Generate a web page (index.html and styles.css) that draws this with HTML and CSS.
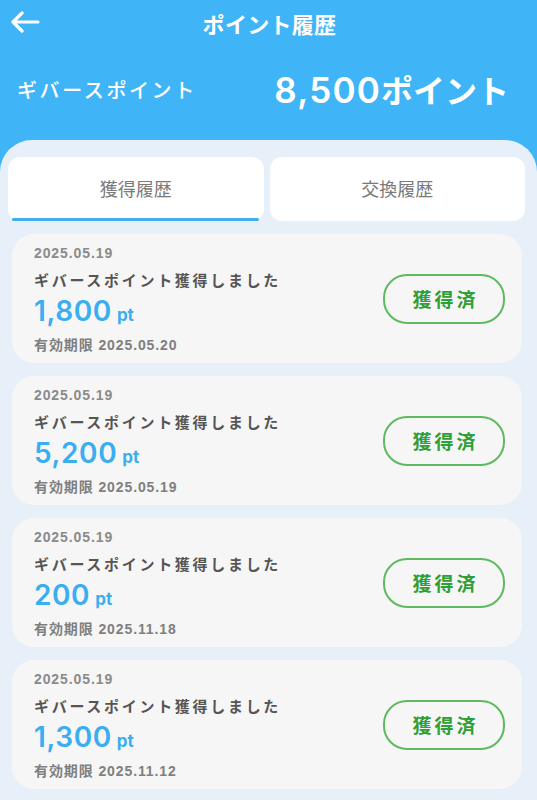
FILE: index.html
```html
<!DOCTYPE html>
<html lang="ja">
<head>
<meta charset="utf-8">
<title>ポイント履歴</title>
<link rel="stylesheet" href="styles.css">
</head>
<body>
<div class="screen">
  <header class="header">
    <div class="topbar">
      <svg class="back" width="30" height="22" viewBox="0 0 30 22"><path d="M28 11H3M12 2L3 11L12 20" fill="none" stroke="#fff" stroke-width="3.2" stroke-linecap="round" stroke-linejoin="round"/></svg>
      <h1 class="title">ポイント履歴</h1>
    </div>
    <div class="summary">
      <span class="summary-label">ギバースポイント</span>
      <span class="summary-value"><span class="num">8,500</span>ポイント</span>
    </div>
  </header>
  <main class="panel">
    <div class="tabs">
      <div class="tab active">獲得履歴</div>
      <div class="tab">交換履歴</div>
    </div>
    <div class="list">
      <div class="card">
        <div class="info">
          <div class="date">2025.05.19</div>
          <div class="desc">ギバースポイント獲得しました</div>
          <div class="points">1,800<span class="unit">pt</span></div>
          <div class="expiry">有効期限 2025.05.20</div>
        </div>
        <div class="badge">獲得済</div>
      </div>
      <div class="card">
        <div class="info">
          <div class="date">2025.05.19</div>
          <div class="desc">ギバースポイント獲得しました</div>
          <div class="points">5,200<span class="unit">pt</span></div>
          <div class="expiry">有効期限 2025.05.19</div>
        </div>
        <div class="badge">獲得済</div>
      </div>
      <div class="card">
        <div class="info">
          <div class="date">2025.05.19</div>
          <div class="desc">ギバースポイント獲得しました</div>
          <div class="points">200<span class="unit">pt</span></div>
          <div class="expiry">有効期限 2025.11.18</div>
        </div>
        <div class="badge">獲得済</div>
      </div>
      <div class="card">
        <div class="info">
          <div class="date">2025.05.19</div>
          <div class="desc">ギバースポイント獲得しました</div>
          <div class="points">1,300<span class="unit">pt</span></div>
          <div class="expiry">有効期限 2025.11.12</div>
        </div>
        <div class="badge">獲得済</div>
      </div>
    </div>
  </main>
</div>
</body>
</html>
```

FILE: styles.css
```css
* { box-sizing: border-box; }
html, body { margin: 0; padding: 0; }
body {
  width: 537px;
  height: 800px;
  overflow: hidden;
  background: #3fb4f6;
  font-family: "Liberation Sans", "Noto Sans CJK JP", sans-serif;
}
.screen { display: flex; flex-direction: column; height: 800px; }
.header {
  background: #3fb4f6;
  color: #fff;
  height: 140px;
}
.topbar {
  position: relative;
  height: 52px;
  display: flex;
  align-items: center;
  justify-content: center;
}
.back { position: absolute; left: 10px; top: 11px; }
.title {
  margin: 0;
  font-size: 22px;
  font-weight: 700;
  letter-spacing: 0.3px;
  line-height: 52px;
  padding-left: 2px;
}
.summary {
  display: flex;
  align-items: center;
  justify-content: space-between;
  padding: 0 28px 0 17px;
  height: 74px;
}
.summary-label {
  font-size: 20px;
  font-weight: 500;
  letter-spacing: 2.6px;
}
.summary-value {
  font-size: 32px;
  font-weight: 700;
}
.num {
  font-family: "Inter", "Liberation Sans", sans-serif;
  font-size: 35px;
  font-weight: 600;
  letter-spacing: 1.2px;
}
.panel {
  flex: 1;
  background: #e7f0f9;
  border-radius: 32px 32px 0 0;
  padding: 17px 12px 0 8px;
}
.tabs {
  display: flex;
  gap: 6px;
  height: 64px;
}
.tab {
  position: relative;
  flex: 1;
  background: #fff;
  border-radius: 12px;
  display: flex;
  align-items: center;
  justify-content: center;
  font-size: 18px;
  color: #7a7a7a;
  padding-bottom: 2px;
}
.tab.active::after {
  content: "";
  position: absolute;
  left: 4px;
  right: 5px;
  bottom: 0;
  height: 3px;
  border-radius: 2px;
  background: #3fb0ee;
}
.list {
  display: flex;
  flex-direction: column;
  gap: 13px;
  margin-top: 13px;
  padding: 0 3px 0 4px;
}
.card {
  height: 129px;
  background: #f6f6f6;
  border-radius: 22px;
  display: flex;
  align-items: center;
  justify-content: space-between;
  padding: 0 17px 0 22px;
}
.info { display: flex; flex-direction: column; padding-top: 1px; }
.date {
  font-size: 14px;
  line-height: 20px;
  color: #8a8a8a;
  font-weight: 700;
  letter-spacing: 0.9px;
}
.desc {
  margin-top: 6px;
  font-size: 15px;
  line-height: 24px;
  color: #555;
  font-weight: 700;
  letter-spacing: 2.7px;
}
.points {
  margin-top: 3px;
  font-family: "Inter", "Liberation Sans", sans-serif;
  font-size: 28px;
  line-height: 30px;
  font-weight: 600;
  letter-spacing: 0.6px;
  color: #3aaef0;
}
.unit {
  font-size: 17px;
  font-weight: 700;
  letter-spacing: 0;
  margin-left: 5px;
}
.expiry {
  margin-top: 5px;
  font-size: 14px;
  line-height: 20px;
  color: #7f7f7f;
  font-weight: 700;
  letter-spacing: 0.9px;
}
.badge {
  width: 122px;
  height: 50px;
  border: 2px solid #5dba5f;
  border-radius: 24px;
  display: flex;
  align-items: center;
  justify-content: center;
  font-size: 19px;
  font-weight: 700;
  color: #2f9f37;
  letter-spacing: 3px;
  padding-left: 3px;
}
```
